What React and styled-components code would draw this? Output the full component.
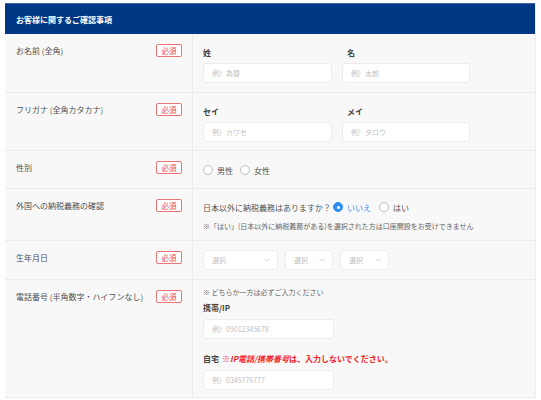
import React from "react";
import styled, { createGlobalStyle } from "styled-components";

const Global = createGlobalStyle`
  html, body { margin: 0; padding: 0; background: #fff; }
  body { font-family: "Noto Sans CJK JP", "Noto Sans", sans-serif; }
  * { box-sizing: border-box; }
`;

const Panel = styled.section`
  width: 531px;
  margin: 3px 0 0 5px;
  background: #f8f8f8;
  border-right: 1px solid #ececec;
`;

const Header = styled.h2`
  margin: 0;
  height: 31px;
  display: flex;
  align-items: center;
  padding-left: 11px;
  background: #003886;
  color: #fff;
  font-size: 8px;
  font-weight: 700;
  border-top: 1px solid #3a62a8;
`;

const Row = styled.div`
  display: grid;
  grid-template-columns: 188px 1fr;
  border-bottom: 1px solid #ebebeb;
`;

const LabelCell = styled.div`
  display: flex;
  align-items: flex-start;
  justify-content: space-between;
  padding: 10px 10px 0 11px;
  border-right: 1px solid #ebebeb;
`;

const LabelLine = styled.div`
  display: flex;
  align-items: center;
  justify-content: space-between;
  width: 100%;
  height: 13px;
`;

const LabelText = styled.span`
  font-size: 8px;
  color: #505050;
  line-height: 12px;
`;

const Badge = styled.span`
  display: inline-flex;
  align-items: center;
  justify-content: center;
  width: 26px;
  height: 13px;
  border: 1px solid #ec7474;
  border-radius: 2px;
  background: #fff;
  color: #e84a4a;
  font-size: 7.5px;
`;

const FieldCell = styled.div`
  padding: ${(p) => p.$pad};
  display: flex;
  flex-direction: column;
`;

const Pair = styled.div`
  display: grid;
  grid-template-columns: 129px 128px;
  column-gap: 10px;
`;

const Field = styled.div`
  display: flex;
  flex-direction: column;
`;

const FieldLabel = styled.div`
  font-size: 8px;
  font-weight: 700;
  color: #444;
  line-height: 12px;
  margin: ${(p) => p.$m || "0 0 4px 0"};
  padding-left: ${(p) => (p.$indent ? "5px" : "0")};
`;

const Warn = styled.span`
  color: #f21d1d;
  font-weight: 700;
  margin-left: 3px;
`;

const Slant = styled.span`
  font-style: italic;
`;

const Input = styled.div`
  width: ${(p) => p.$w}px;
  height: 20px;
  background: #fff;
  border: 1px solid #ececec;
  border-radius: 3px;
  display: flex;
  align-items: center;
  padding-left: 8px;
  font-size: 7px;
  color: #c2c2c2;
`;

const RadioGroup = styled.div`
  display: flex;
  align-items: center;
  height: 12px;
  font-size: 8px;
  color: #555;
`;

const RadioItem = styled.label`
  display: inline-flex;
  align-items: center;
  gap: 4px;
  margin-right: ${(p) => p.$mr || 7}px;
  color: ${(p) => (p.$checked ? "#3d8fe8" : "#555")};
`;

const Circle = styled.span`
  width: 10px;
  height: 10px;
  border-radius: 50%;
  border: 1px solid ${(p) => (p.$checked ? "#2f8cf0" : "#bdbdbd")};
  background: ${(p) => (p.$checked ? "#2f8cf0" : "#fff")};
  display: inline-flex;
  align-items: center;
  justify-content: center;
  &::after {
    content: "";
    width: 3px;
    height: 3px;
    border-radius: 50%;
    background: ${(p) => (p.$checked ? "#fff" : "transparent")};
  }
`;

const Question = styled.span`
  margin-right: 2px;
`;

const Note = styled.div`
  font-size: 7px;
  color: #666;
  line-height: 12px;
  margin-top: ${(p) => p.$mt || 0}px;
`;

const Selects = styled.div`
  display: flex;
  gap: 7px;
`;

const Select = styled.div`
  width: ${(p) => p.$w}px;
  height: 20px;
  background: #fff;
  border: 1px solid #ececec;
  border-radius: 3px;
  display: flex;
  align-items: center;
  justify-content: space-between;
  padding: 0 7px 0 8px;
  font-size: 7px;
  color: #c2c2c2;
`;

const Chevron = () => (
  <svg width="6" height="4" viewBox="0 0 6 4" fill="none">
    <path d="M0.5 0.8 L3 3.2 L5.5 0.8" stroke="#c8c8c8" strokeWidth="0.8" />
  </svg>
);

const Required = ({ label }) => (
  <LabelCell>
    <LabelLine>
      <LabelText>{label}</LabelText>
      <Badge>必須</Badge>
    </LabelLine>
  </LabelCell>
);

export default function App() {
  return (
    <>
      <Global />
      <Panel>
        <Header>お客様に関するご確認事項</Header>

        <Row>
          <Required label="お名前 (全角)" />
          <FieldCell $pad="13px 0 9px 10px">
            <Pair>
              <Field>
                <FieldLabel>姓</FieldLabel>
                <Input $w={129}>例）為替</Input>
              </Field>
              <Field>
                <FieldLabel $indent>名</FieldLabel>
                <Input $w={128}>例）太郎</Input>
              </Field>
            </Pair>
          </FieldCell>
        </Row>

        <Row>
          <Required label="フリガナ (全角カタカナ)" />
          <FieldCell $pad="13px 0 8px 10px">
            <Pair>
              <Field>
                <FieldLabel>セイ</FieldLabel>
                <Input $w={129}>例）カワセ</Input>
              </Field>
              <Field>
                <FieldLabel $indent>メイ</FieldLabel>
                <Input $w={128}>例）タロウ</Input>
              </Field>
            </Pair>
          </FieldCell>
        </Row>

        <Row>
          <Required label="性別" />
          <FieldCell $pad="13px 0 12px 10px">
            <RadioGroup>
              <RadioItem>
                <Circle />
                男性
              </RadioItem>
              <RadioItem>
                <Circle />
                女性
              </RadioItem>
            </RadioGroup>
          </FieldCell>
        </Row>

        <Row>
          <Required label="外国への納税義務の確認" />
          <FieldCell $pad="12px 0 8px 10px">
            <RadioGroup>
              <Question>日本以外に納税義務はありますか？</Question>
              <RadioItem $checked $mr={8}>
                <Circle $checked />
                いいえ
              </RadioItem>
              <RadioItem>
                <Circle />
                はい
              </RadioItem>
            </RadioGroup>
            <Note $mt={7}>
              ※「はい」(日本以外に納税義務がある)を選択された方は口座開設をお受けできません
            </Note>
          </FieldCell>
        </Row>

        <Row>
          <Required label="生年月日" />
          <FieldCell $pad="9px 0 9px 10px">
            <Selects>
              <Select $w={75}>
                選択
                <Chevron />
              </Select>
              <Select $w={48}>
                選択
                <Chevron />
              </Select>
              <Select $w={49}>
                選択
                <Chevron />
              </Select>
            </Selects>
          </FieldCell>
        </Row>

        <Row>
          <Required label="電話番号 (半角数字・ハイフンなし)" />
          <FieldCell $pad="6px 0 7px 10px">
            <Note>※ どちらか一方は必ずご入力ください</Note>
            <FieldLabel $m="4px 0 5px 0">携帯/IP</FieldLabel>
            <Input $w={131}>例）09012345678</Input>
            <FieldLabel $m="14px 0 5px 0">
              自宅
              <Warn>
                ※<Slant>IP電話/携帯番号</Slant>は、入力しないでください。
              </Warn>
            </FieldLabel>
            <Input $w={131}>例）0345776777</Input>
          </FieldCell>
        </Row>
      </Panel>
    </>
  );
}
